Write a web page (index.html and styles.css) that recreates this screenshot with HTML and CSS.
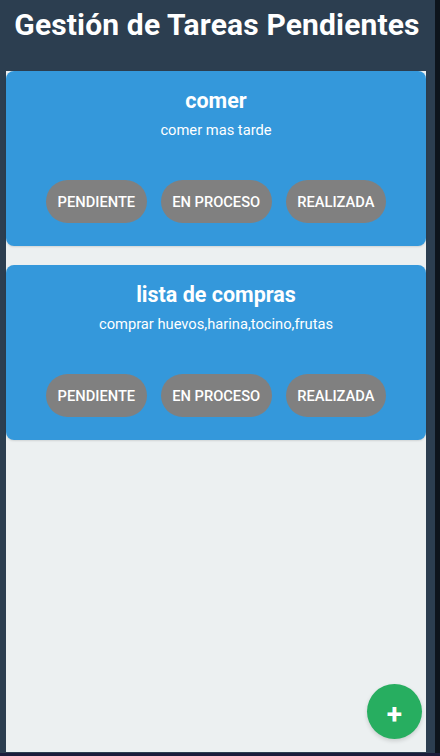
FILE: index.html
```html
<!DOCTYPE html>
<html lang="es">
<head>
<meta charset="utf-8">
<title>Gestión de Tareas Pendientes</title>
<link rel="stylesheet" href="styles.css">
</head>
<body>
<div class="screen">
  <div class="app">
    <h1 class="title">Gestión de Tareas Pendientes</h1>
    <main class="board">
      <section class="card">
        <h3 class="card-title">comer</h3>
        <p class="card-desc">comer mas tarde</p>
        <div class="actions">
          <button class="btn">PENDIENTE</button>
          <button class="btn">EN PROCESO</button>
          <button class="btn">REALIZADA</button>
        </div>
      </section>
      <section class="card">
        <h3 class="card-title">lista de compras</h3>
        <p class="card-desc">comprar huevos,harina,tocino,frutas</p>
        <div class="actions">
          <button class="btn">PENDIENTE</button>
          <button class="btn">EN PROCESO</button>
          <button class="btn">REALIZADA</button>
        </div>
      </section>
      <button class="fab" aria-label="Agregar">+</button>
    </main>
  </div>
  <div class="scrollbar"></div>
</div>
<div class="bottom-line"></div>
</body>
</html>
```
FILE: styles.css
```css
* { box-sizing: border-box; }
html, body { margin: 0; padding: 0; height: 100%; }
body {
  background: #2c3e50;
  font-family: Roboto, "Noto Sans", sans-serif;
  display: flex;
  flex-direction: column;
  overflow: hidden;
}
.screen {
  display: flex;
  height: 753px;
}
.app {
  width: 435px;
  display: flex;
  flex-direction: column;
  padding: 0 9px 1px 6px;
}
.scrollbar {
  width: 5px;
  background: #0d141c;
}
.title {
  margin: 0;
  height: 71px;
  padding-top: 5px;
  padding-left: 2px;
  color: #fff;
  font-size: 30px;
  font-weight: 700;
  letter-spacing: 0.15px;
  line-height: 40px;
  text-align: center;
  white-space: nowrap;
}
.board {
  position: relative;
  flex: 1;
  background: #ecf0f1;
  display: flex;
  flex-direction: column;
  gap: 19px;
}
.card {
  background: #3498db;
  border-radius: 8px;
  padding: 18px 20px 23px;
  text-align: center;
  color: #fff;
  box-shadow: 0 1px 2px rgba(0,0,0,0.12);
}
.card-title {
  margin: 0;
  font-size: 21.5px;
  font-weight: 700;
  line-height: 24px;
}
.card-desc {
  margin: 8px 0 0;
  font-size: 14.7px;
  line-height: 18px;
}
.actions {
  margin-top: 41px;
  display: flex;
  justify-content: center;
  gap: 14px;
}
.btn {
  background: #808080;
  color: #fff;
  border: none;
  border-radius: 22px;
  height: 43px;
  padding: 0 11.5px;
  font-family: Roboto, "Noto Sans", sans-serif;
  font-size: 14.7px;
  font-weight: 500;
}
.fab {
  position: absolute;
  right: 4px;
  bottom: 13px;
  width: 55px;
  height: 55px;
  border-radius: 50%;
  border: none;
  background: #27ae60;
  color: #fff;
  font-family: Roboto, sans-serif;
  font-size: 28px;
  font-weight: 700;
  line-height: 1;
  padding-top: 8px;
  box-shadow: 0 2px 4px rgba(0,0,0,0.15);
}
.bottom-line {
  height: 3px;
  background: #1b1c3a;
}
```
